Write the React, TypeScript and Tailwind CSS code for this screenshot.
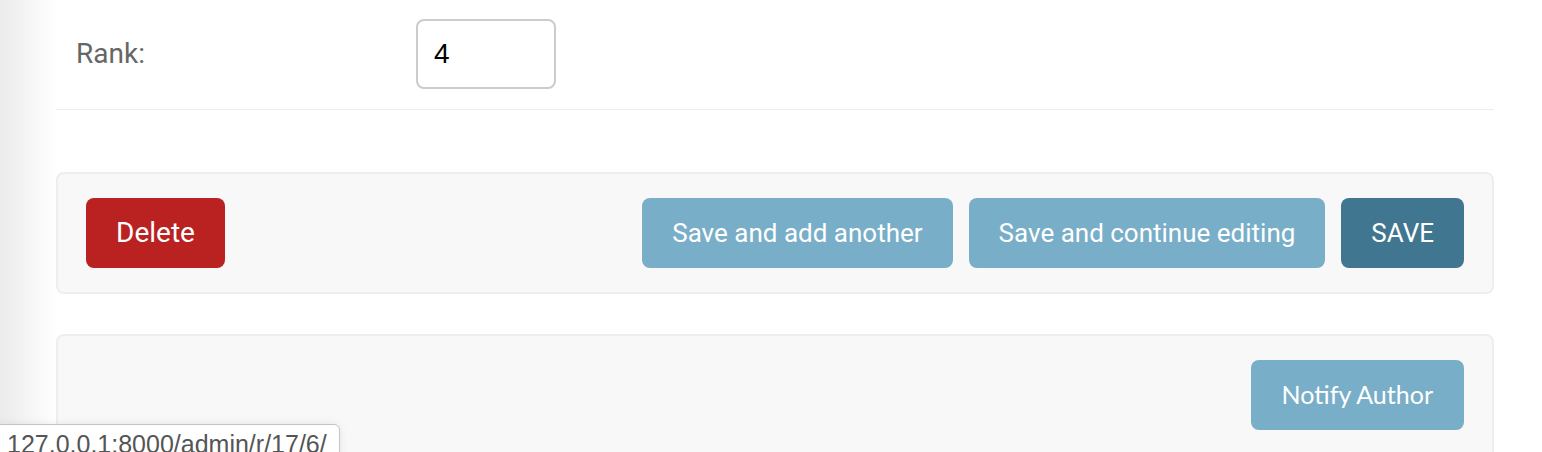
const btnBase =
  "h-[70px] px-[30px] rounded-[8px] flex items-center text-white font-['Roboto',sans-serif]";

export default function App() {
  return (
    <div className="relative flex h-[452px] w-[1542px] overflow-hidden bg-white">
      {/* shadow from the sidebar */}
      <div className="w-[56px] shrink-0 bg-gradient-to-r from-[#ebebeb] to-white" />

      <div className="w-[1438px] shrink-0">
        {/* form row */}
        <div className="flex items-center border-b border-[#eee] px-[20px] pt-[19px] pb-[20px]">
          <label className="w-[340px] text-[28px] text-[#666] font-['Roboto',sans-serif]">Rank:</label>
          <input
            defaultValue="4"
            className="h-[70px] w-[140px] rounded-[8px] border-2 border-[#ccc] px-[16px] text-[28px] text-black outline-none font-['Liberation_Sans',Arial,sans-serif]"
          />
        </div>

        {/* submit row */}
        <div className="mt-[62px] flex items-center justify-between rounded-[8px] border-2 border-[#eee] bg-[#f8f8f8] px-[28px] py-[24px]">
          <a className={`${btnBase} text-[28px] bg-[#ba2121]`}>Delete</a>
          <div className="flex gap-[16px]">
            <button className={`${btnBase} text-[26px] bg-[#79aec8]`}>Save and add another</button>
            <button className={`${btnBase} text-[26px] bg-[#79aec8]`}>Save and continue editing</button>
            <button className={`${btnBase} text-[26px] bg-[#417690]`}>SAVE</button>
          </div>
        </div>

        {/* extra actions */}
        <div className="mt-[40px] flex h-[200px] items-start justify-end rounded-[8px] border-2 border-[#eee] bg-[#f8f8f8] px-[28px] pt-[24px]">
          <button className="h-[70px] px-[31px] rounded-[8px] flex items-center bg-[#79aec8] text-white text-[25px] font-['Lato',sans-serif]">
            Notify Author
          </button>
        </div>
      </div>

      {/* status bar tooltip */}
      <div className="absolute left-[-2px] top-[424px] h-[40px] w-[342px] rounded-tr-[6px] border border-[#c4c4c4] bg-white pl-[8px] pt-[4px] shadow-[0_0_10px_rgba(0,0,0,0.08)]">
        <span className="text-[25px] leading-[30px] text-[#555] font-['Liberation_Sans',Arial,sans-serif]">
          127.0.0.1:8000/admin/r/17/6/
        </span>
      </div>
    </div>
  );
}
